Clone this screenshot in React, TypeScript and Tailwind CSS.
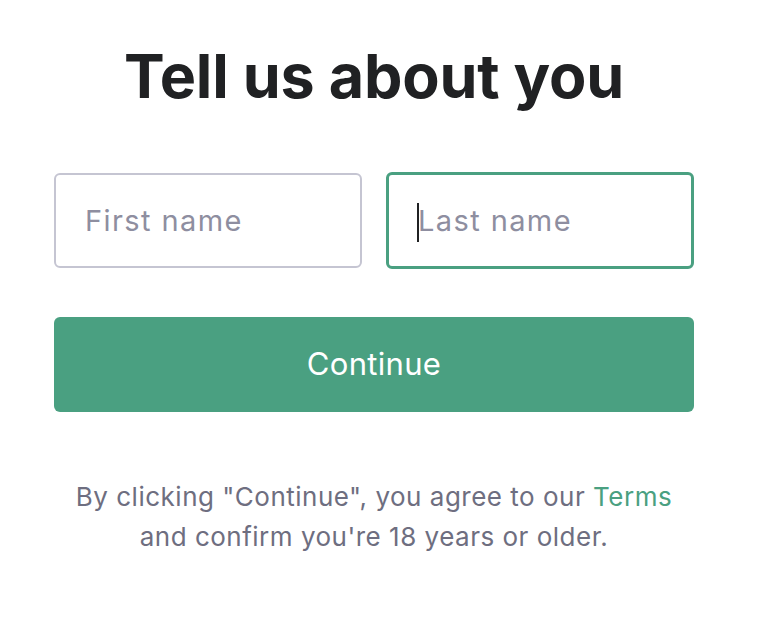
import { useState } from 'react';

const GREEN = '#4aa081';

export default function App() {
  const [first, setFirst] = useState('');
  const [last, setLast] = useState('');

  return (
    <div className="min-h-screen bg-white" style={{ fontFamily: 'Inter, "Noto Sans", sans-serif' }}>
      <div className="w-[640px] ml-[54px] pt-[36px] flex flex-col">
        {/* Title */}
        <h1 className="text-center text-[61px] leading-[80px] font-bold tracking-[-0.2px] text-[#202123]">
          Tell us about you
        </h1>

        {/* Name inputs */}
        <div className="mt-[57px] grid grid-cols-2 gap-[24px]">
          <input
            value={first}
            onChange={e => setFirst(e.target.value)}
            placeholder="First name"
            className="w-full min-w-0 h-[95px] rounded-[6px] border-2 border-[#c5c5d2] px-[29px] text-[29px] tracking-[1.4px] text-[#202123] placeholder:text-[#8e8ea0] outline-none"
          />
          <div className="relative min-w-0">
            <input
              value={last}
              onChange={e => setLast(e.target.value)}
              placeholder="Last name"
              className="w-full h-[97px] -mt-[1px] rounded-[6px] border-[3px] border-[#4aa081] px-[29px] text-[29px] tracking-[1.4px] text-[#202123] placeholder:text-[#8e8ea0] outline-none"
            />
            {/* caret */}
            {last === '' && (
              <span className="absolute left-[31px] top-[30px] w-[2px] h-[39px] bg-[#202123]" />
            )}
          </div>
        </div>

        {/* Continue */}
        <button
          className="mt-[48px] h-[95px] rounded-[6px] text-white text-[31px] tracking-[0.3px] cursor-pointer"
          style={{ backgroundColor: GREEN }}
        >
          Continue
        </button>

        {/* Terms */}
        <p className="mt-[65px] text-center text-[26px] leading-[40px] tracking-[0.5px] text-[#6e6e80]">
          By clicking "Continue", you agree to our{' '}
          <a href="#" className="text-[#4aa081]">Terms</a>
          <br />
          and confirm you're 18 years or older.
        </p>
      </div>
    </div>
  );
}
